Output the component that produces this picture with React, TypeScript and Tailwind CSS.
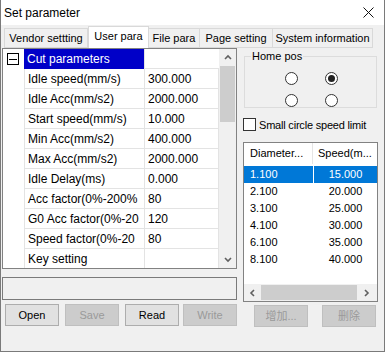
import React from "react";

const treeRows: [string, string][] = [
  ["Idle speed(mm/s)", "300.000"],
  ["Idle Acc(mm/s2)", "2000.000"],
  ["Start speed(mm/s)", "10.000"],
  ["Min Acc(mm/s2)", "400.000"],
  ["Max Acc(mm/s2)", "2000.000"],
  ["Idle Delay(ms)", "0.000"],
  ["Acc factor(0%-200%", "80"],
  ["G0 Acc factor(0%-20", "120"],
  ["Speed factor(0%-20", "80"],
  ["Key setting", ""],
];

const speedRows: [string, string][] = [
  ["1.100", "15.000"],
  ["2.100", "20.000"],
  ["3.100", "25.000"],
  ["4.100", "30.000"],
  ["6.100", "35.000"],
  ["8.100", "40.000"],
];

const tabs = [
  { label: "Vendor settting", w: "w-[84px]" },
  { label: "User para", w: "w-[61px]", active: true },
  { label: "File para", w: "w-[51px]" },
  { label: "Page setting", w: "w-[73px]" },
  { label: "System information", w: "w-[100px]" },
];

function Chevron({ dir }: { dir: "up" | "down" | "left" | "right" }) {
  const d = {
    up: "M1 5 L4 2 L7 5",
    down: "M1 2 L4 5 L7 2",
    left: "M5 1 L2 4 L5 7",
    right: "M2 1 L5 4 L2 7",
  }[dir];
  return (
    <svg width="8" height="8" viewBox="0 0 8 8">
      <path d={d} fill="none" stroke="#606060" strokeWidth="1.6" />
    </svg>
  );
}

function Radio({ checked }: { checked?: boolean }) {
  return (
    <span className="w-[13px] h-[13px] rounded-full border border-[#333] bg-white flex items-center justify-center">
      {checked && <span className="w-[7px] h-[7px] rounded-full bg-[#222]" />}
    </span>
  );
}

function Btn({ label, disabled, w = "w-[54px]" }: { label: string; disabled?: boolean; w?: string }) {
  return (
    <div
      className={`${w} h-[22px] flex items-center justify-center border ${
        disabled
          ? "bg-[#cccccc] border-[#bfbfbf] text-[#9a9a9a]"
          : "bg-[#e1e1e1] border-[#adadad] text-black"
      }`}
    >
      {label}
    </div>
  );
}

export default function App() {
  return (
    <div className="w-[385px] h-[352px] bg-[#f0f0f0] border-x border-b border-[#7a7a7a] flex flex-col overflow-hidden text-[11px] text-black font-['Liberation_Sans','Noto_Sans_CJK_SC',sans-serif]">
      {/* Title bar */}
      <div className="h-[25px] bg-white flex items-center justify-between pl-[3px] pr-[10px]">
        <span className="text-[12px]">Set parameter</span>
        <svg width="11" height="11" viewBox="0 0 11 11">
          <path d="M0.5 0.5 L10.5 10.5 M10.5 0.5 L0.5 10.5" stroke="#111" strokeWidth="1" />
        </svg>
      </div>

      {/* Tabs */}
      <div className="h-[23px] flex items-end pl-[3px]">
        {tabs.map((t, i) =>
          t.active ? (
            <div
              key={t.label}
              className={`${t.w} h-[22px] bg-white border-x border-t border-[#d9d9d9] flex items-center justify-center pb-[2px]`}
            >
              {t.label}
            </div>
          ) : (
            <div
              key={t.label}
              className={`${t.w} h-[20px] bg-[#f0f0f0] border-t border-r border-b border-[#d9d9d9] ${
                i === 0 ? "border-l" : ""
              } flex items-center justify-center`}
            >
              {t.label}
            </div>
          )
        )}
      </div>

      <div className="flex pl-[1px]">
        {/* Left column */}
        <div className="w-[235px] flex flex-col">
          {/* Tree grid */}
          <div className="h-[221px] border border-[#828282] bg-white flex overflow-hidden text-[12px]">
            <div className="flex-1 flex flex-col">
              <div className="h-[20px] flex shrink-0">
                <div className="w-[21px] flex items-center">
                  <span className="ml-[4px] w-[12px] h-[12px] border border-black flex items-center justify-center">
                    <span className="w-[8px] h-px bg-black" />
                  </span>
                </div>
                <div className="w-[120px] bg-[#0000c8] text-white pl-[3px] flex items-center whitespace-nowrap">
                  Cut parameters
                </div>
                <div className="flex-1 border-l border-b border-[#e3e3e3]" />
              </div>
              {treeRows.map(([name, value]) => (
                <div key={name} className="h-[20px] flex shrink-0">
                  <div className="w-[21px]" />
                  <div className="w-[121px] border-l border-r border-b border-[#e3e3e3] pl-[3px] flex items-center whitespace-nowrap overflow-hidden">
                    {name}
                  </div>
                  <div className="flex-1 border-r border-b border-[#e3e3e3] pl-[3px] flex items-center">
                    {value}
                  </div>
                </div>
              ))}
            </div>
            <div className="w-[17px] bg-[#f0f0f0] flex flex-col">
              <div className="h-[17px] flex items-center justify-center">
                <Chevron dir="up" />
              </div>
              <div className="h-[56px] mx-px bg-[#cdcdcd]" />
              <div className="flex-1" />
              <div className="h-[17px] flex items-center justify-center">
                <Chevron dir="down" />
              </div>
            </div>
          </div>

          {/* Status box */}
          <div className="mt-[8px] h-[23px] border border-[#7a7a7a] bg-[#f0f0f0]" />

          {/* Buttons */}
          <div className="mt-[4px] flex pl-[3px]">
            <Btn label="Open" />
            <div className="ml-[6px]">
              <Btn label="Save" disabled />
            </div>
            <div className="ml-[6px]">
              <Btn label="Read" />
            </div>
            <div className="ml-[4px]">
              <Btn label="Write" disabled />
            </div>
          </div>
        </div>

        {/* Right column */}
        <div className="ml-[6px] w-[135px] flex flex-col">
          <fieldset className="ml-px w-[133px] border border-[#dcdcdc]">
            <legend className="ml-[6px] px-[1px]">Home pos</legend>
            <div className="grid grid-cols-[13px_13px] gap-x-[27px] gap-y-[9px] ml-[40px] mt-[7px]">
              <Radio />
              <Radio checked />
              <Radio />
              <Radio />
            </div>
          </fieldset>

          <div className="mt-[9px] flex items-center">
            <span className="w-[13px] h-[13px] border border-[#333] bg-white" />
            <span className="ml-[3px] tracking-[-0.2px]">Small circle speed limit</span>
          </div>

          {/* List view */}
          <div className="mt-[9px] h-[160px] border border-[#828282] bg-white flex flex-col">
            <div className="h-[21px] flex shrink-0">
              <div className="w-[69px] border-r border-[#e5e5e5] pl-[6px] flex items-center">Diameter...</div>
              <div className="flex-1 pl-[5px] flex items-center">Speed(m...</div>
            </div>
            <div className="mt-[2px] flex flex-col">
              {speedRows.map(([d, s], i) => (
                <div key={d} className="h-[17px] flex">
                  <div
                    className={`w-[69px] pl-[6px] flex items-center ${
                      i === 0 ? "bg-[#0078d7] text-white" : ""
                    }`}
                  >
                    {d}
                  </div>
                  <div
                    className={`flex-1 ml-px flex items-center justify-center ${
                      i === 0 ? "bg-[#0078d7] text-white" : ""
                    }`}
                  >
                    {s}
                  </div>
                </div>
              ))}
            </div>
            <div className="flex-1" />
            <div className="h-[17px] bg-[#f0f0f0] flex items-center">
              <div className="w-[17px] flex items-center justify-center">
                <Chevron dir="left" />
              </div>
              <div className="w-[96px] h-[15px] bg-[#cdcdcd]" />
              <div className="flex-1 flex items-center justify-center">
                <Chevron dir="right" />
              </div>
            </div>
          </div>

          <div className="mt-[3px] flex pl-[11px]">
            <Btn label="增加..." disabled />
            <div className="ml-[14px]">
              <Btn label="删除" disabled />
            </div>
          </div>
        </div>
      </div>
    </div>
  );
}
